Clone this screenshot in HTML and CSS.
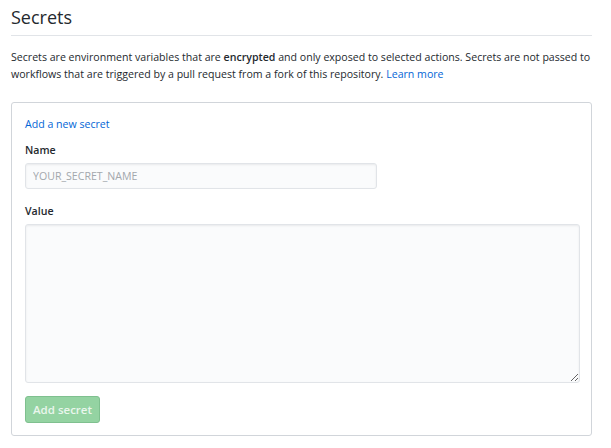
FILE: index.html
```html
<!DOCTYPE html>
<html lang="en">
<head>
<meta charset="utf-8">
<title>Secrets</title>
<link rel="stylesheet" href="styles.css">
</head>
<body>
<div class="page">
  <div class="subhead">
    <h2 class="subhead-heading">Secrets</h2>
  </div>
  <p class="intro">Secrets are environment variables that are <strong>encrypted</strong> and only exposed to selected actions. Secrets are not passed to workflows that are triggered by a pull request from a fork of this repository. <a href="#" class="link">Learn more</a></p>
  <div class="box">
    <a href="#" class="link box-title">Add a new secret</a>
    <form class="form">
      <label class="label" for="name">Name</label>
      <input id="name" class="input" type="text" placeholder="YOUR_SECRET_NAME">
      <label class="label label-value" for="value">Value</label>
      <textarea id="value" class="textarea"></textarea>
      <button type="button" class="btn" disabled>Add secret</button>
    </form>
  </div>
</div>
</body>
</html>
```

FILE: styles.css
```css
html, body {
  margin: 0;
  padding: 0;
  background: #ffffff;
}

body {
  font-family: "Open Sans", "Noto Sans", sans-serif;
  font-size: 10.6px;
  line-height: 17px;
  color: #24292e;
}

.page {
  margin-left: 11px;
  width: 581px;
  padding-top: 5px;
}

.subhead {
  border-bottom: 1px solid #e1e4e8;
  padding-bottom: 5px;
}

.subhead-heading {
  margin: 0;
  font-size: 18px;
  line-height: 25px;
  font-weight: 400;
}

.intro {
  margin: 13px 0 0 0;
}

.intro strong {
  font-weight: 600;
}

.link {
  color: #0366d6;
  text-decoration: none;
}

.box {
  margin-top: 19px;
  border: 1px solid #d1d5da;
  border-radius: 3px;
  padding: 13px 13px 12px 13px;
}

.box-title {
  display: block;
}

.form {
  display: flex;
  flex-direction: column;
  align-items: flex-start;
  margin: 0;
}

.label {
  margin-top: 9px;
  margin-bottom: 4px;
  font-weight: 600;
}

.label-value {
  margin-top: 14px;
}

.input {
  box-sizing: border-box;
  width: 352px;
  height: 26px;
  margin: 0;
  padding: 0 7px;
  border: 1px solid #e1e4e8;
  border-radius: 3px;
  background: #fafbfc;
  font-family: inherit;
  font-size: 10.6px;
  color: #24292e;
  box-shadow: inset 0 1px 2px rgba(27, 31, 35, 0.075);
}

.input::placeholder {
  color: #a3a8ad;
}

.textarea {
  box-sizing: border-box;
  width: 555px;
  height: 159px;
  margin: 0;
  padding: 6px 7px;
  border: 1px solid #e1e4e8;
  border-radius: 3px;
  background: #fafbfc;
  font-family: inherit;
  font-size: 10.6px;
  box-shadow: inset 0 1px 2px rgba(27, 31, 35, 0.075);
}

.btn {
  box-sizing: border-box;
  margin-top: 13px;
  width: 75px;
  height: 27px;
  padding: 0;
  border: 1px solid #7fc08f;
  border-radius: 3px;
  background: #94d3a2;
  color: #eaf6ed;
  font-family: inherit;
  font-size: 11.5px;
  font-weight: 600;
}
```
